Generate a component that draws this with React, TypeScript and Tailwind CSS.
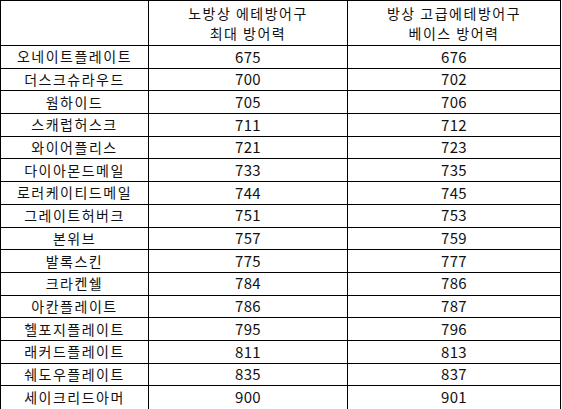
const rows: [string, number, number][] = [
  ["오네이트플레이트", 675, 676],
  ["더스크슈라우드", 700, 702],
  ["웜하이드", 705, 706],
  ["스캐럽허스크", 711, 712],
  ["와이어플리스", 721, 723],
  ["다이아몬드메일", 733, 735],
  ["로러케이티드메일", 744, 745],
  ["그레이트허버크", 751, 753],
  ["본위브", 757, 759],
  ["발록스킨", 775, 777],
  ["크라켄쉘", 784, 786],
  ["아칸플레이트", 786, 787],
  ["헬포지플레이트", 795, 796],
  ["래커드플레이트", 811, 813],
  ["쉐도우플레이트", 835, 837],
  ["세이크리드아머", 900, 901],
];

export default function App() {
  return (
    <div className="min-h-[409px] w-[562px] bg-white text-[14px] tracking-[1.5px] text-[#111] [font-family:'Noto_Sans_CJK_KR','Noto_Sans',sans-serif]">
      <div className="w-[561px] border border-black">
        <div className="grid grid-cols-[148px_199px_212px]">
          <div className="h-[45px] border-b border-r border-black" />
          <div className="flex h-[45px] flex-col items-center justify-center border-b border-r border-black leading-[20px]">
            <span>노방상 에테방어구</span>
            <span>최대 방어력</span>
          </div>
          <div className="flex h-[45px] flex-col items-center justify-center border-b border-black leading-[20px]">
            <span>방상 고급에테방어구</span>
            <span>베이스 방어력</span>
          </div>
          {rows.map(([name, max, base], i) => {
            const last = i === rows.length - 1;
            return [
              <div
                key={`n${i}`}
                className={`flex h-[22.69px] items-center justify-center border-r border-black ${last ? "" : "border-b"}`}
              >
                {name}
              </div>,
              <div
                key={`m${i}`}
                className={`flex h-[22.69px] items-center justify-center border-r border-black text-[15px] tracking-[0.4px] ${last ? "" : "border-b"}`}
              >
                {max}
              </div>,
              <div
                key={`b${i}`}
                className={`flex h-[22.69px] items-center justify-center border-black text-[15px] tracking-[0.4px] ${last ? "" : "border-b"}`}
              >
                {base}
              </div>,
            ];
          })}
        </div>
      </div>
    </div>
  );
}
